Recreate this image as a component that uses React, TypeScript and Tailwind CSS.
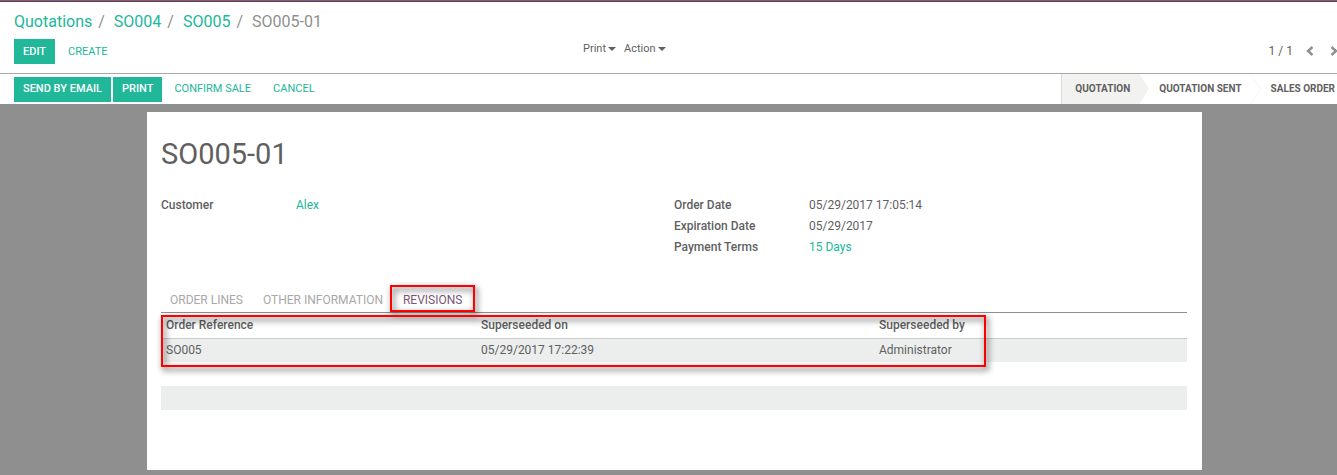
import type { ReactNode } from "react";

const link = "text-[#21b799] hover:underline";
const primaryButton = "h-[25px] bg-[#21b799] px-[9px] pt-px text-[11px] font-medium text-white uppercase";
const flatButton = "h-[25px] px-[10px] pt-px text-[11px] text-[#21b799] uppercase";
const highlight =
  "pointer-events-none absolute border-2 border-[#ff0000] drop-shadow-[2px_3px_3px_rgba(0,0,0,0.8)]";

const crumbs = ["Quotations", "SO004", "SO005"];

function Caret() {
  return (
    <svg width="8" height="4" viewBox="0 0 8 4" fill="currentColor" aria-hidden="true">
      <path d="M0 0h8L4 4z" />
    </svg>
  );
}

function Chevron({ direction }: { direction: "left" | "right" }) {
  return (
    <svg width="8" height="10" viewBox="0 0 8 10" fill="none" stroke="#8f8f8f" strokeWidth="2.400" aria-hidden="true">
      <path d={direction === "left" ? "M6.500 1 2 5l4.500 4" : "M1.500 1 6 5 1.500 9"} />
    </svg>
  );
}

function StageArrow({ fill, stroke }: { fill: string; stroke: string }) {
  return (
    <svg className="shrink-0" width="10" height="30" viewBox="0 0 10 30" fill={fill} aria-hidden="true">
      <path d="M0 0 9.500 15 0 30" stroke={stroke} />
    </svg>
  );
}

function Field({ label, children }: { label: string; children: ReactNode }) {
  return (
    <div className="flex h-[21px] items-center">
      <dt className="w-[135px] font-medium">{label}</dt>
      <dd>{children}</dd>
    </div>
  );
}

export default function App() {
  return (
    <div className="overflow-hidden bg-white font-[Roboto,sans-serif] text-xs text-[#5f5f5f]">
      <div className="-mr-3 flex min-h-screen flex-col">
        <div className="h-[2px] border-b border-[#5f3f56] bg-[#875a7b]" />

        <header className="border-b border-[#a8a8a8] px-[14px] pt-[8px] pb-[9px]">
          <nav aria-label="Breadcrumb">
            <ol className="flex h-6 items-center text-base text-[#8f8f8f]">
              {crumbs.map((crumb) => (
                <li key={crumb} className="flex">
                  <a href="#" className={link}>{crumb}</a>
                  <span className="pr-[9px] pl-[6px]">/</span>
                </li>
              ))}
              <li aria-current="page">SO005-01</li>
            </ol>
          </nav>
          <div className="mt-[5px] grid grid-cols-[569px_1fr_auto] items-start">
            <div className="flex gap-[3px]">
              <button className={primaryButton}>Edit</button>
              <button className={flatButton}>Create</button>
            </div>
            <div className="flex gap-2 text-[11px] leading-5">
              <button className="flex items-center gap-[2px]">Print <Caret /></button>
              <button className="flex items-center gap-[2px]">Action <Caret /></button>
            </div>
            <div className="flex h-[23px] items-center">
              <span className="mr-[13px]">1 / 1</span>
              <button aria-label="Previous" className="mr-4"><Chevron direction="left" /></button>
              <button aria-label="Next" className="-mr-[7px] w-[12px]"><Chevron direction="right" /></button>
            </div>
          </div>
        </header>

        <div className="flex h-[30px] items-center justify-between pl-[14px]">
          <div className="flex gap-[2px]">
            <button className={primaryButton}>Send by Email</button>
            <button className={primaryButton}>Print</button>
            <button className={flatButton}>Confirm Sale</button>
            <button className={flatButton}>Cancel</button>
          </div>
          <ol className="flex h-full items-center text-[10px] font-bold uppercase">
            <li className="flex h-full items-center">
              <span className="flex h-full items-center border-l border-[#dcdcdc] bg-[#f2f2f0] pr-[9px] pl-[13px]">Quotation</span>
              <StageArrow fill="#f2f2f0" stroke="#f2f2f0" />
            </li>
            <li className="flex h-full items-center">
              <span className="pr-[9px] pl-[10px]">Quotation Sent</span>
              <StageArrow fill="none" stroke="#f4f4f4" />
            </li>
            <li className="pr-[14px] pl-[10px]">Sales Order</li>
          </ol>
        </div>

        <main className="flex-1 bg-[#8f8f8f] px-[147px] pt-2 pb-[5px]">
          <section className="bg-white pt-[24px] pr-[15px] pb-[36px] pl-[14px]">
            <h1 className="text-[29px] leading-9">SO005-01</h1>

            <div className="mt-[22px] grid grid-cols-2">
              <dl>
                <Field label="Customer"><a href="#" className={link}>Alex</a></Field>
              </dl>
              <dl>
                <Field label="Order Date">05/29/2017 17:05:14</Field>
                <Field label="Expiration Date">05/29/2017</Field>
                <Field label="Payment Terms"><a href="#" className={link}>15 Days</a></Field>
              </dl>
            </div>

            <div role="tablist" className="mt-[28px] flex h-[28px] gap-5 border-b border-[#8f8f8f] px-[9px] text-[#a8a8a8]">
              <button role="tab" aria-selected="false" className="pt-[2px] uppercase">Order Lines</button>
              <button role="tab" aria-selected="false" className="pt-[2px] uppercase">Other Information</button>
              <button role="tab" aria-selected="true" className="relative pt-[2px] text-[#7c5576] uppercase">
                Revisions
                <span className={`${highlight} -inset-x-[13px] inset-y-0`} />
              </button>
            </div>

            <div className="relative">
              <table className="w-full table-fixed border-collapse text-left">
                <thead>
                  <tr className="h-[25px] border-b border-[#cacaca]">
                    <th className="w-[315px] pl-[5px] font-medium">Order Reference</th>
                    <th className="w-[398px] pl-[5px] font-medium">Superseeded on</th>
                    <th className="pl-[5px] font-medium">Superseeded by</th>
                  </tr>
                </thead>
                <tbody>
                  <tr className="h-6 bg-[#eceeed]">
                    <td className="pl-[5px]">SO005</td>
                    <td className="pl-[5px]">05/29/2017 17:22:39</td>
                    <td className="pl-[5px]">Administrator</td>
                  </tr>
                  <tr className="h-6"><td colSpan={3} /></tr>
                  <tr className="h-6 bg-[#eceeed]"><td colSpan={3} /></tr>
                  <tr className="h-6"><td colSpan={3} /></tr>
                </tbody>
              </table>
              <div className={`${highlight} top-[2px] left-0 h-[52px] w-[825px]`} />
            </div>
          </section>
        </main>
      </div>
    </div>
  );
}
